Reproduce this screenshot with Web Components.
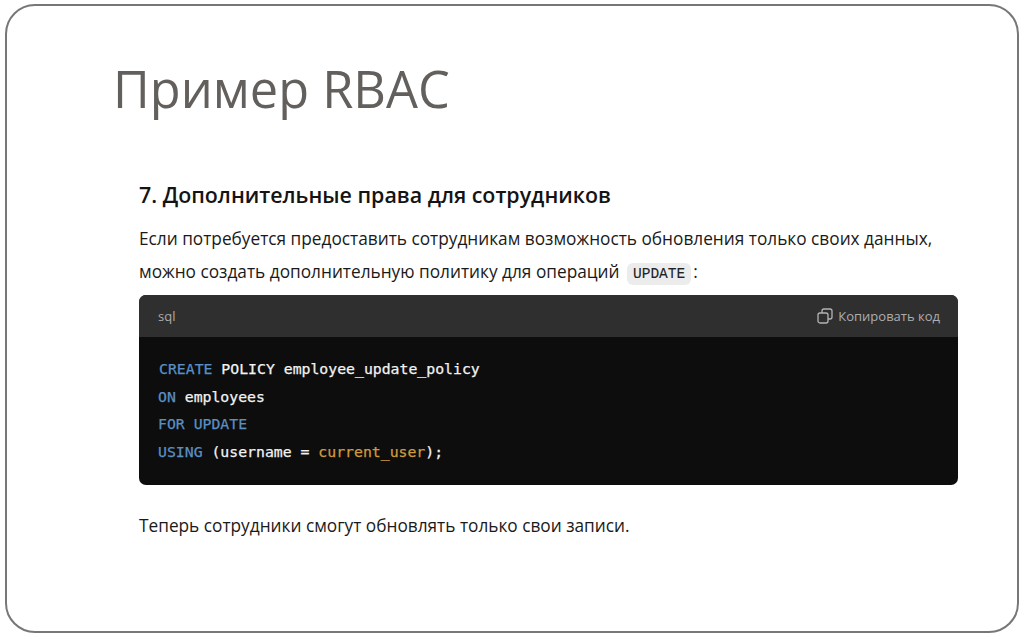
<!DOCTYPE html>
<html lang="ru">
<head>
<meta charset="utf-8">
<title>Пример RBAC</title>
<style>
  html, body { margin: 0; height: 100%; background: #fff; }
  body { overflow: hidden; }
</style>
</head>
<body>
<slide-frame>
  <span slot="title">Пример RBAC</span>
  <chat-answer>
    <span slot="heading">7. Дополнительные права для сотрудников</span>
    <span slot="intro">Если потребуется предоставить сотрудникам возможность обновления только своих данных,<br>можно создать дополнительную политику для операций <inline-code>UPDATE</inline-code>:</span>
    <code-block lang="sql"><span class="c0"><b style="color:#5b8fc4;font-weight:400;margin-left:1px">CREATE</b> POLICY employee_update_policy
<b style="color:#5b8fc4;font-weight:400">ON</b> employees
<b style="color:#5b8fc4;font-weight:400">FOR UPDATE</b>
<b style="color:#5b8fc4;font-weight:400">USING</b> (username = <b style="color:#d19a3e;font-weight:400">current_user</b>);</span></code-block>
    <span slot="outro">Теперь сотрудники смогут обновлять только свои записи.</span>
  </chat-answer>
</slide-frame>
<script>
class SlideFrame extends HTMLElement {
  connectedCallback() {
    this.attachShadow({ mode: 'open' });
    this.shadowRoot.innerHTML = `
      <style>
        :host {
          display: block;
          box-sizing: border-box;
          width: 1014px;
          height: 629px;
          margin: 4px 0 0 5px;
          border: 2px solid #777;
          border-radius: 30px;
          padding: 47px 0 0 106px;
          background: #fff;
        }
        h1 {
          margin: 0 0 55px;
          font: 400 50.5px/72px "Open Sans", sans-serif;
          color: #625f5c;
        }
      </style>
      <h1><slot name="title"></slot></h1>
      <slot></slot>
    `;
  }
}

class ChatAnswer extends HTMLElement {
  connectedCallback() {
    this.attachShadow({ mode: 'open' });
    this.shadowRoot.innerHTML = `
      <style>
        :host {
          display: block;
          width: 819px;
          margin-left: 26px;
          font-family: "Open Sans", sans-serif;
          color: #1a1a1a;
        }
        h2 {
          margin: 0 0 13px;
          font-size: 21.4px;
          line-height: 30px;
          font-weight: 600;
          color: #141414;
        }
        p {
          margin: 0;
          font-size: 17.25px;
          line-height: 32.5px;
          white-space: nowrap;
        }
        .outro { margin-top: 25px; }
      </style>
      <h2><slot name="heading"></slot></h2>
      <p><slot name="intro"></slot></p>
      <slot></slot>
      <p class="outro"><slot name="outro"></slot></p>
    `;
  }
}

class InlineCode extends HTMLElement {
  connectedCallback() {
    this.attachShadow({ mode: 'open' });
    this.shadowRoot.innerHTML = `
      <style>
        :host {
          display: inline-block;
          padding: 0 6px;
          margin: 0 2px 0 3px;
          background: #ececec;
          border-radius: 6px;
          font: 14.5px/22px "Liberation Mono", monospace;
          -webkit-text-stroke: 0.1px currentColor;
          color: #222;
        }
      </style>
      <slot></slot>
    `;
  }
}

class CodeBlock extends HTMLElement {
  connectedCallback() {
    this.attachShadow({ mode: 'open' });
    this.shadowRoot.innerHTML = `
      <style>
        :host {
          display: block;
          margin-top: 7px;
          background: #0d0d0d;
          border-radius: 7px;
          overflow: hidden;
        }
        header {
          display: flex;
          justify-content: space-between;
          align-items: center;
          height: 42px;
          padding: 0 18px 0 19px;
          background: #2f2f2f;
          color: #adadad;
          font: 13px "Open Sans", sans-serif;
        }
        .copy { display: flex; align-items: center; gap: 5px; }
        svg { display: block; }
        pre {
          margin: 0;
          padding: 18px 19px 20px;
          font: 500 14.8px/27.6px "DejaVu Sans Mono", monospace;
          -webkit-text-stroke: 0.25px currentColor;
          color: #f2f2f2;
        }
      </style>
      <header>
        <span>${this.getAttribute('lang')}</span>
        <span class="copy">
          <svg width="16" height="16" viewBox="0 0 16 16" fill="none" stroke="#b4b4b4" stroke-width="1.3">
            <rect x="1" y="5" width="10" height="10" rx="2"/>
            <path d="M5 5V3a2 2 0 0 1 2-2h6a2 2 0 0 1 2 2v6a2 2 0 0 1-2 2h-2"/>
          </svg>
          Копировать код
        </span>
      </header>
      <pre><slot></slot></pre>
    `;
  }
}

customElements.define('slide-frame', SlideFrame);
customElements.define('chat-answer', ChatAnswer);
customElements.define('inline-code', InlineCode);
customElements.define('code-block', CodeBlock);
</script>
</body>
</html>
